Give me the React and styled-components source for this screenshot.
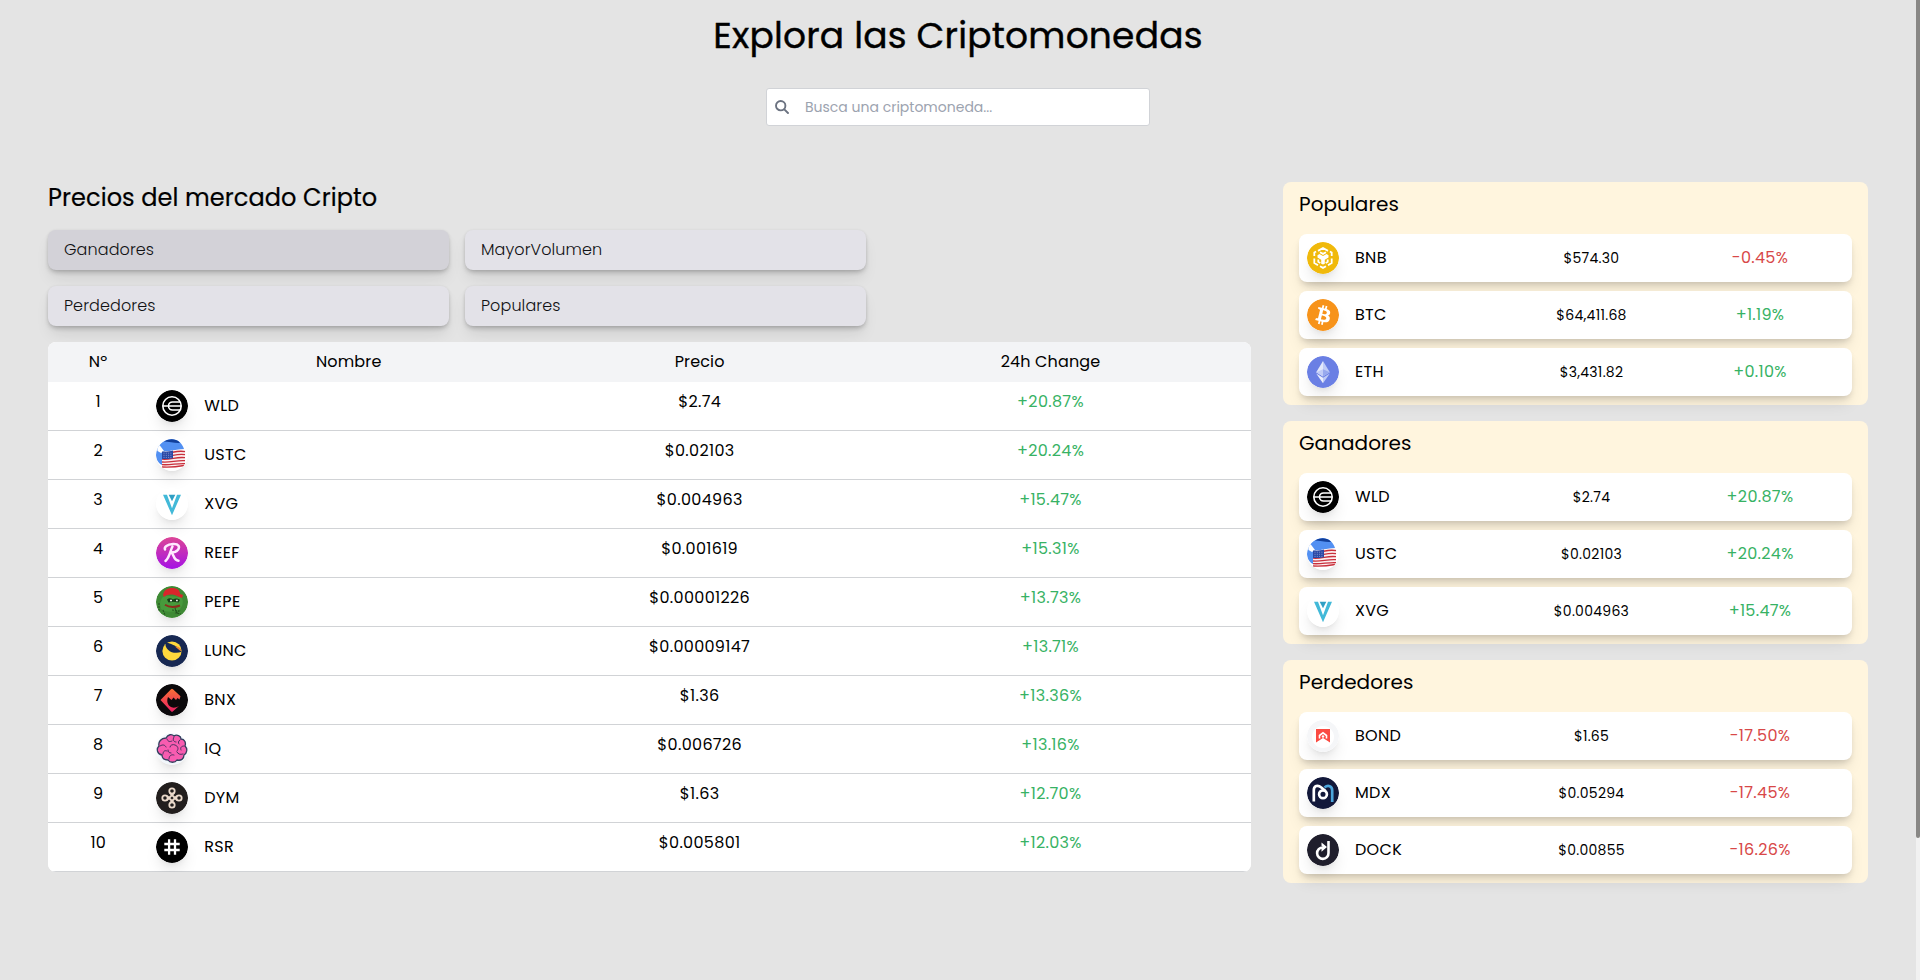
import React from 'react';
import styled, { createGlobalStyle } from 'styled-components';

const GlobalStyle = createGlobalStyle`
  *, *::before, *::after { box-sizing: border-box; }
  html { background: #e4e4e4; }
  body {
    margin: 0;
    height: 980px;
    overflow: hidden;
    color: #000;
    font-family: Poppins, "Open Sans", sans-serif;
    font-size: 16px;
    line-height: 24px;
  }
  h1, h2, h3, p { margin: 0; font-weight: 400; }
`;

const Screen = styled.div`
  display: flex;
  height: 980px;
  background: #e4e4e4;
`;

const Page = styled.main`
  flex: 1;
  min-width: 0;
`;

const ScrollTrack = styled.div`
  width: 4px;
  background: #f1f1f1;
`;

const ScrollThumb = styled.div`
  height: 838px;
  background: #888785;
  border-radius: 0 0 2px 2px;
`;

const Header = styled.header`
  display: flex;
  flex-direction: column;
  align-items: center;
  height: 182px;
  padding-top: 16px;
`;

const Title = styled.h1`
  font-size: 36px;
  line-height: 40px;
  letter-spacing: 0.2px;
  -webkit-text-stroke: 0.4px #000;
`;

const SearchBox = styled.label`
  display: flex;
  align-items: center;
  width: 384px;
  height: 38px;
  margin-top: 32px;
  padding-left: 8px;
  background: #fff;
  border: 1px solid #d1d3d7;
  border-radius: 3px;
`;

const SearchInput = styled.input`
  flex: 1;
  margin-left: 16px;
  padding: 0;
  border: 0;
  outline: 0;
  background: transparent;
  font: inherit;
  font-size: 14px;
  line-height: 20px;
  &::placeholder { color: #9ca3af; opacity: 1; }
`;

const Content = styled.div`
  display: flex;
  align-items: flex-start;
  gap: 32px;
  padding: 0 48px;
`;

const Market = styled.section`
  width: 1203px;
`;

const MarketTitle = styled.h2`
  font-size: 24px;
  line-height: 32px;
  letter-spacing: 0.09px;
  -webkit-text-stroke: 0.2px #000;
`;

const Filters = styled.div`
  display: grid;
  grid-template-columns: repeat(2, 401px);
  gap: 16px;
  margin: 16px 0;
`;

const Filter = styled.button`
  height: 40px;
  padding: 0 16px;
  border: 0;
  border-radius: 8px;
  background: ${(p) => (p.$active ? '#d3d2d8' : '#e3e2e8')};
  box-shadow: 0 10px 15px -3px rgba(0, 0, 0, 0.1), 0 3px 5px -1px rgba(0, 0, 0, 0.22), 0 0 3px rgba(0, 0, 0, 0.06);
  color: #111113;
  font: inherit;
  font-weight: 300;
  letter-spacing: 0.1px;
  text-align: left;
`;

const Table = styled.div`
  position: relative;
  overflow: hidden;
  border-radius: 8px;
  background: #fff;
`;

const TableRow = styled.div`
  display: grid;
  grid-template-columns: 1fr 4fr 3fr 4fr;
  height: ${(p) => (p.$head ? 40 : 49)}px;
  padding: 8px 0;
  background: ${(p) => (p.$head ? '#f3f4f6' : '#fff')};
  border-bottom: ${(p) => (p.$head ? '0' : '1px solid #d1d3d6')};
  letter-spacing: 0.15px;
  text-align: center;
`;

const NameCell = styled.div`
  display: flex;
  align-items: center;
  height: 32px;
  gap: 16px;
  padding-left: ${(p) => p.$pad || 0}px;
  letter-spacing: 0.3px;
`;

const Price = styled.span`
  font-size: ${(p) => (p.$small ? 14 : 16)}px;
  letter-spacing: 0.02em;
  text-align: center;
`;

const Change = styled.span`
  color: ${(p) => (p.$down ? '#d84848' : '#37b264')};
  letter-spacing: 0.02em;
  text-align: center;
`;

const Side = styled.aside`
  display: flex;
  flex-direction: column;
  gap: 16px;
  width: 585px;
`;

const Card = styled.section`
  height: 223px;
  padding: 8px 16px 9px;
  border-radius: 8px;
  background: #fff5de;
`;

const CardTitle = styled.h3`
  font-size: 20px;
  line-height: 28px;
  letter-spacing: 0.05px;
  margin-bottom: 16px;
`;

const CardList = styled.div`
  display: flex;
  flex-direction: column;
  gap: 9px;
`;

const CardRow = styled.div`
  display: grid;
  grid-template-columns: 200px 169px 168px;
  align-items: center;
  height: 48px;
  padding: 0 8px;
  border-radius: 8px;
  background: #fff;
  box-shadow: 0 10px 15px -3px rgba(0, 0, 0, 0.1), 0 4px 6px -2px rgba(0, 0, 0, 0.15);
`;

const Coin = styled.svg`
  flex: none;
  width: 32px;
  height: 32px;
  border-radius: 50%;
  box-shadow: 0 10px 15px -3px rgba(0, 0, 0, 0.1), 0 4px 6px -4px rgba(0, 0, 0, 0.1);
`;

const art = {
  WLD: (
    <>
      <circle cx="16" cy="16" r="16" fill="#000" />
      <g fill="none" stroke="#fff" strokeWidth="1.6">
        <circle cx="16" cy="16" r="9.2" />
        <path d="M7 16h18M24 12h-7.500a4 4 0 0 0 0 8H24" />
      </g>
    </>
  ),
  USTC: (
    <>
      <circle cx="16" cy="16" r="16" fill="#fff" />
      <path d="M0 16C0 7 7 0 15 0c7 0 11 4 13 10L6 13v13C2 24 0 20 0 16z" fill="#5290f2" />
      <path d="M8 2.500C14-1 21 0 24 4c-5 .5-11-1.500-16-1.500z" fill="#123f9a" />
      <path d="M1 8l2.500-2L8 12l-3 2-3.500-2z" fill="#fff" />
      <path d="M6 12.500c8 1 15-3.500 23-1.500v15c-1 3-15 2.500-23 2z" fill="#fbeff0" />
      <path d="M6 14.200c8 1 15-3.500 23-1.500M6 17.200c8 1 15-3.200 23-1.500M6 20.200c8 1 15-2.800 23-1.500M6 23c8 1 15-2.200 23-1.300M6 25.600c8 .8 15-1.500 23-1M6 28c8 .5 15-.2 22-1.500" fill="none" stroke="#c9303c" strokeWidth="1.300" />
      <path d="M6 12.500c4 .4 8 0 11-.9v7.600c-4 .8-8 1-11 .8z" fill="#2b48a4" />
      <path d="M7.500 14.200h8.500M7.500 16.300h8.500M7.500 18.400h8.500" stroke="#a9b8ea" strokeWidth=".7" strokeDasharray="1 1.300" />
    </>
  ),
  XVG: (
    <>
      <circle cx="16" cy="16" r="16" fill="#fff" />
      <path d="M7 6.700h4L16 20.200l5-13.500h4L16 27.300z" fill="#42b9d8" />
      <path d="M12.700 6.700h6.600L16 13.200z" fill="#2f9fc4" />
    </>
  ),
  REEF: (
    <>
      <defs>
        <linearGradient id="reef" x1="0" y1="0" x2="0" y2="1">
          <stop stopColor="#dc4596" />
          <stop offset="1" stopColor="#a512e5" />
        </linearGradient>
      </defs>
      <circle cx="16" cy="16" r="16" fill="url(#reef)" />
      <path d="M9 12.500c-1-2.500 2-5 8-5.500 6-.4 7 3 5 5.800-1.600 2-4 2.700-7 2.700 3 .5 2 8 7.500 8.200M16.500 9.500C14 14 14 20 9.500 24" fill="none" stroke="#ffe9ff" strokeWidth="2.500" strokeLinecap="round" strokeLinejoin="round" />
    </>
  ),
  PEPE: (
    <>
      <circle cx="16" cy="16" r="16" fill="#3e8a34" />
      <path d="M4 18C5 10 9 9 14 10l11 1c3 3 2 9-1 12-6 4-16 3-19 0z" fill="#479a3c" />
      <path d="M7 9c1-5 4-7 9-7 5 0 8 2 8 6l3 1-1 3-5-2C16 8 12 8 8 11z" fill="#d9252b" />
      <path d="M11 13.500c2-2 4-1.500 6 0 2-1.600 5-1.500 7 .4l-1.500 2.600-5-.7-5 .7z" fill="#173f17" />
      <path d="M14 13.700h2v1.500h-2zM20 13.700h1.800v1.500H20z" fill="#e8efe2" />
      <path d="M9 18.800c4 2.600 10 2.700 15 .7" fill="none" stroke="#8c2d1c" strokeWidth="1.900" />
      <path d="M3 17v9M7 24l2 5M16 24l7 1-3 2 5 1M19 22l2 6" fill="none" stroke="#24551f" strokeWidth="1.100" strokeDasharray="2 1" />
    </>
  ),
  LUNC: (
    <>
      <circle cx="16" cy="16" r="16" fill="#172852" />
      <circle cx="16" cy="16" r="9.600" fill="#ffd83d" />
      <path d="M9.500 8.500c2.500-1.500 8 1.400 15 5.500l1 2.700c-4 2-10 1.500-13.500-2C10 13 9.300 10.800 9.500 8.500z" fill="#172852" />
      <path d="M19 11.600c3-.3 5.500.7 6.400 4.700-2.200-.6-3.800-2.900-6.400-4.700z" fill="#f28a32" />
    </>
  ),
  BNX: (
    <>
      <defs>
        <linearGradient id="bnx" x1="0" y1="0" x2="0" y2="1">
          <stop stopColor="#fb7136" />
          <stop offset="1" stopColor="#e91e63" />
        </linearGradient>
      </defs>
      <circle cx="16" cy="16" r="16" fill="#0b090b" />
      <path d="M4.500 16L15 5.300q1-1 2 0l7.500 7-1 3.200-2-1.500-1.500 2-2.500-2.500-2 2.500-3.500-3c-1.500 4-.5 7 1.500 9 3 2.500 6 2 9.500 0l-6 5.300q-1 1-2 0z" fill="url(#bnx)" />
    </>
  ),
  IQ: (
    <>
      <circle cx="16" cy="16" r="16" fill="#f1f6fb" />
      <path d="M10 5c2-4 6-4 8-2 3-2 7 0 7 3 4 0 5 4 4 7 3 3 2 7-1 9 0 4-3 6-7 5-2 3-7 3-9 0-4 0-6-2-6-5-5-1-6-6-3-9-1-4 2-8 7-8z" fill="#f85cb0" stroke="#34405e" strokeWidth="1.300" />
      <path d="M11 6c1 3 3 3 5 2M18 4c-2 3 0 5 2 5M24 7c-2 1-2 3-1 4M4 13c3-2 5-1 6 1M7 21c0-3 2-4 4-3M28 13c-3 0-4 2-3 4M27 21c-3 1-5 0-6-2M13 26c0-3 2-5 5-4M14 14c0-2 3-3 5-2 3 1 4 4 2 6M12 17c0 2 1 3 3 3" fill="none" stroke="#4a3262" strokeWidth="1" strokeLinecap="round" />
    </>
  ),
  DYM: (
    <>
      <circle cx="16" cy="16" r="16" fill="#221e1d" />
      <g fill="none" stroke="#ead9ca" strokeWidth="1.800">
        <circle cx="16" cy="9" r="2.700" />
        <circle cx="16" cy="23" r="2.700" />
        <circle cx="9" cy="16" r="2.700" />
        <circle cx="23" cy="16" r="2.700" />
        <path d="M11 18l7-7M14 21l7-7M11 14l7 7M14 11l7 7" />
      </g>
    </>
  ),
  RSR: (
    <>
      <circle cx="16" cy="16" r="16" fill="#000" />
      <path d="M13.100 8.300v15.400M19 8.300v15.400M8.300 13h15.400M8.300 19h15.400" stroke="#fff" strokeWidth="2.300" />
    </>
  ),
  BNB: (
    <>
      <circle cx="16" cy="16" r="16" fill="#f0b90b" />
      <g fill="none" stroke="#fff" strokeWidth="1.800">
        <path d="M11 8.900L16 6l5 2.900M7.300 14v-3.500l1.800-1M24.700 14v-3.500l-1.800-1M13 10.300l3 1.600 3-1.600M7.300 16.500v4.500l3.700 2.200M24.700 16.500v4.500L21 23.200M11.300 17.500v2.300l2 1.200M20.700 17.500v2.300l-2 1.200M13 24.200l3 1.700 3-1.700" />
      </g>
      <path d="M10.500 13.200l2-1.200 3.500 2.100 3.500-2.100 2 1.200v2.200l-3.700 2.300v4L16 22.600l-1.800-.9v-4l-3.700-2.300z" fill="#fff" />
    </>
  ),
  BTC: (
    <>
      <circle cx="16" cy="16" r="16" fill="#f7931a" />
      <path fill="#fff" d="M23.189 14.020c.314-2.096-1.283-3.223-3.465-3.975l.708-2.840-1.728-.43-.690 2.765c-.454-.114-.920-.220-1.385-.326l.695-2.783L15.596 6l-.708 2.839c-.376-.086-.746-.170-1.104-.260l.002-.009-2.384-.595-.460 1.846s1.283.294 1.256.312c.700.175.826.638.805 1.006l-.806 3.235c.048.012.110.030.180.057l-.183-.045-1.130 4.532c-.086.212-.303.531-.793.410.018.025-1.256-.313-1.256-.313l-.858 1.978 2.250.561c.418.105.828.215 1.231.318l-.715 2.872 1.727.430.708-2.840c.472.127.930.245 1.378.357l-.706 2.828 1.728.430.715-2.866c2.948.558 5.164.333 6.097-2.333.752-2.146-.037-3.385-1.588-4.192 1.130-.260 1.980-1.003 2.207-2.538zm-3.950 5.538c-.533 2.147-4.148.986-5.320.695l.950-3.805c1.172.293 4.929.872 4.370 3.110zm.535-5.569c-.487 1.953-3.495.960-4.470.717l.860-3.450c.975.243 4.118.696 3.610 2.733z" />
    </>
  ),
  ETH: (
    <>
      <circle cx="16" cy="16" r="16" fill="#6a7fe4" />
      <path d="M16 5l6.800 11.300L16 20.400z" fill="#c0cbf7" />
      <path d="M16 5L9.200 16.300l6.800 4.100z" fill="#e3e8fb" />
      <path d="M16 13.200l6.800 3.100-6.800 4.100z" fill="#98a9ee" />
      <path d="M16 13.200l-6.800 3.100 6.800 4.100z" fill="#c3cdf7" />
      <path d="M16 21.700l6.800-4.100L16 27.200z" fill="#c0cbf7" />
      <path d="M16 21.700l-6.800-4.100L16 27.200z" fill="#ebeefc" />
    </>
  ),
  BOND: (
    <>
      <circle cx="16" cy="16" r="16" fill="#f5f6f8" />
      <circle cx="16" cy="17" r="11" fill="#fff" />
      <path d="M9 9h14v13.500L16 18l-7 4.500z" fill="#fb4b42" />
      <path d="M12.500 18.500v-3L16 12.800l3.500 2.700v3" fill="none" stroke="#fff" strokeWidth="1.600" />
      <circle cx="16" cy="16.500" r="1.200" fill="#fff" />
    </>
  ),
  MDX: (
    <>
      <circle cx="16" cy="16" r="16" fill="#12183a" />
      <g fill="none" strokeWidth="2.700">
        <path d="M17.500 10.500c3.500-3 7.700-1.500 7.700 3V25" stroke="#4ba5dc" />
        <path d="M6.800 24.500V13c0-4.200 4-5.500 7.200-2.700l4.500 3.700" stroke="#fff" />
        <circle cx="16" cy="17.300" r="3.900" stroke="#fff" />
      </g>
    </>
  ),
  DOCK: (
    <>
      <circle cx="16" cy="16" r="16" fill="#1f1e2c" />
      <path d="M21.500 7v12a5.700 5.700 0 1 1-5.700-5.500h1.500" fill="none" stroke="#fff" strokeWidth="2.600" />
      <path d="M14.500 8.500l5.500 4.600-5.500 4.600v-3.200l1.800-1.400-1.800-1.400z" fill="#fff" />
    </>
  ),
};

const CoinIcon = ({ symbol }) => <Coin viewBox="0 0 32 32">{art[symbol]}</Coin>;

const market = [
  ['WLD', '$2.74', '+20.87%'],
  ['USTC', '$0.02103', '+20.24%'],
  ['XVG', '$0.004963', '+15.47%'],
  ['REEF', '$0.001619', '+15.31%'],
  ['PEPE', '$0.00001226', '+13.73%'],
  ['LUNC', '$0.00009147', '+13.71%'],
  ['BNX', '$1.36', '+13.36%'],
  ['IQ', '$0.006726', '+13.16%'],
  ['DYM', '$1.63', '+12.70%'],
  ['RSR', '$0.005801', '+12.03%'],
];

const cards = [
  ['Populares', [['BNB', '$574.30', '-0.45%'], ['BTC', '$64,411.68', '+1.19%'], ['ETH', '$3,431.82', '+0.10%']]],
  ['Ganadores', market.slice(0, 3)],
  ['Perdedores', [['BOND', '$1.65', '-17.50%'], ['MDX', '$0.05294', '-17.45%'], ['DOCK', '$0.00855', '-16.26%']]],
];

export default function App() {
  return (
    <Screen>
      <GlobalStyle />
      <Page>
        <Header>
          <Title>Explora las Criptomonedas</Title>
          <SearchBox>
            <svg width="14" height="14" viewBox="0 0 14 14" fill="none" stroke="#6b7280" strokeWidth="1.900" strokeLinecap="round">
              <circle cx="5.700" cy="5.700" r="4.700" />
              <path d="M9.300 9.300l3.700 3.700" />
            </svg>
            <SearchInput placeholder="Busca una criptomoneda..." />
          </SearchBox>
        </Header>
        <Content>
          <Market>
            <MarketTitle>Precios del mercado Cripto</MarketTitle>
            <Filters>
              {['Ganadores', 'MayorVolumen', 'Perdedores', 'Populares'].map((name, i) => (
                <Filter key={name} $active={i === 0}>{name}</Filter>
              ))}
            </Filters>
            <Table>
              <TableRow $head>
                <span>Nº</span>
                <span>Nombre</span>
                <span>Precio</span>
                <span>24h Change</span>
              </TableRow>
              {market.map(([symbol, price, change], i) => (
                <TableRow key={symbol}>
                  <span>{i + 1}</span>
                  <NameCell $pad={8}><CoinIcon symbol={symbol} />{symbol}</NameCell>
                  <Price>{price}</Price>
                  <Change>{change}</Change>
                </TableRow>
              ))}
            </Table>
          </Market>
          <Side>
            {cards.map(([title, coins]) => (
              <Card key={title}>
                <CardTitle>{title}</CardTitle>
                <CardList>
                  {coins.map(([symbol, price, change]) => (
                    <CardRow key={symbol}>
                      <NameCell><CoinIcon symbol={symbol} />{symbol}</NameCell>
                      <Price $small>{price}</Price>
                      <Change $down={change.startsWith('-')}>{change}</Change>
                    </CardRow>
                  ))}
                </CardList>
              </Card>
            ))}
          </Side>
        </Content>
      </Page>
      <ScrollTrack><ScrollThumb /></ScrollTrack>
    </Screen>
  );
}
